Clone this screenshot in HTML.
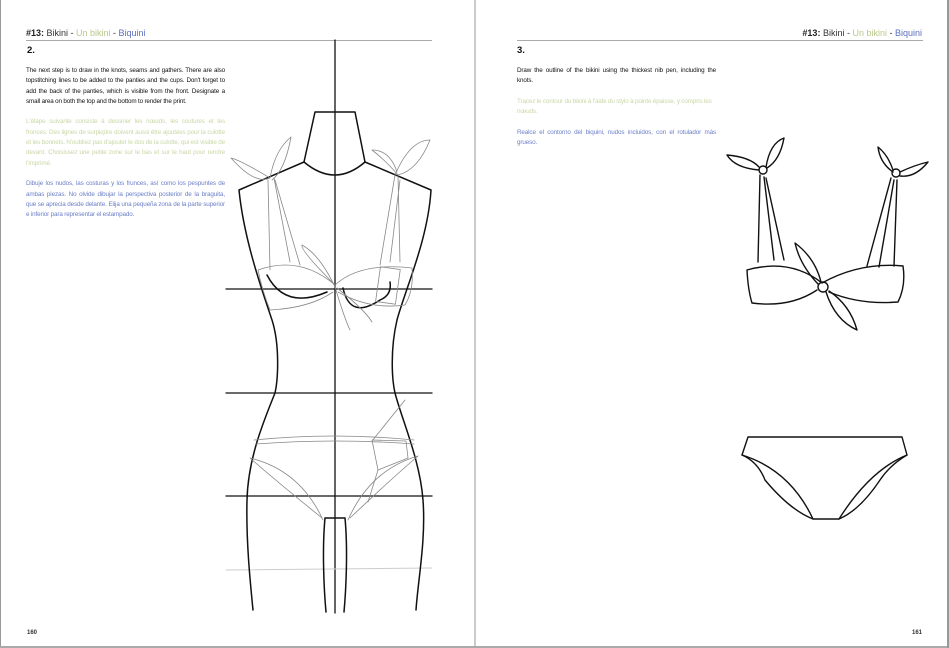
<!DOCTYPE html>
<html><head><meta charset="utf-8"><style>
html,body{margin:0;padding:0}
body{width:949px;height:648px;position:relative;background:#fff;overflow:hidden;font-family:"Liberation Sans",sans-serif;}
.hd{position:absolute;top:28px;font-size:9px;color:#333;white-space:nowrap}
.hd b{color:#222}
.g{color:#b7c98a}.b{color:#5a6fc0}
.rule{position:absolute;top:40px;height:1px;background:#aaa}
.num{position:absolute;top:45px;font-size:9.5px;font-weight:bold;color:#111}
.txt{position:absolute;font-size:6.3px;line-height:10.3px;text-align:justify;width:199px;letter-spacing:-0.13px;word-spacing:-0.1px}
.txt p{margin:0 0 10.3px 0}
.j{text-align-last:left}
.en{color:#111}.fr{color:#c9d7a6}.es{color:#6b7fc8}
.pg{position:absolute;top:630px;font-size:6px;font-weight:bold;color:#333}
</style></head><body>
<div style="position:absolute;left:0;top:0;width:1px;height:648px;background:#999"></div>
<div style="position:absolute;left:0;top:646px;width:949px;height:2px;background:#aaa"></div>
<div style="position:absolute;left:474px;top:0;width:2px;height:646px;background:#ccc"></div>
<div style="position:absolute;left:947px;top:0;width:2px;height:648px;background:#999"></div>

<div class="hd" style="left:26px"><b>#13:</b> Bikini - <span class="g">Un bikini</span> - <span class="b">Biquini</span></div>
<div class="rule" style="left:26px;width:406px"></div>
<div class="num" style="left:27px">2.</div>
<div class="txt" style="left:26px;top:66px">
<p class="en">The next step is to draw in the knots, seams and gathers. There are also topstitching lines to be added to the panties and the cups. Don't forget to add the back of the panties, which is visible from the front. Designate a small area on both the top and the bottom to render the print.</p>
<p class="fr">L'étape suivante consiste à dessiner les nœuds, les coutures et les fronces. Des lignes de surpiqûre doivent aussi être ajoutées pour la culotte et les bonnets. N'oubliez pas d'ajouter le dos de la culotte, qui est visible de devant. Choisissez une petite zone sur le bas et sur le haut pour rendre l'imprimé.</p>
<p class="es">Dibuje los nudos, las costuras y los frunces, así como los pespuntes de ambas piezas. No olvide dibujar la perspectiva posterior de la braguita, que se aprecia desde delante. Elija una pequeña zona de la parte superior e inferior para representar el estampado.</p>
</div>
<div class="pg" style="left:27px">160</div>

<div class="hd" style="right:27px"><b>#13:</b> Bikini - <span class="g">Un bikini</span> - <span class="b">Biquini</span></div>
<div class="rule" style="left:517px;width:406px"></div>
<div class="num" style="left:517px">3.</div>
<div class="txt" style="left:517px;top:66px">
<p class="en" style="text-align-last:justify">Draw the outline of the bikini using the thickest nib pen, including the<br><span style="display:inline-block">knots.</span></p>
<p class="fr">Tracez le contour du bikini à l'aide du stylo à pointe épaisse, y compris les<br>nœuds.</p>
<p class="es">Realce el contorno del biquini, nudos incluidos, con el rotulador más grueso.</p>
</div>
<div class="pg" style="left:912px">161</div>

<svg width="949" height="648" style="position:absolute;left:0;top:0" fill="none" stroke-linecap="round" stroke-linejoin="round">
<g stroke="#111" stroke-width="1.3">
<line x1="335" y1="40" x2="335" y2="613"/>
<line x1="226" y1="289" x2="432" y2="289"/>
<line x1="226" y1="393" x2="432" y2="393"/>
<line x1="226" y1="496" x2="432" y2="496"/>
</g>
<line x1="226" y1="570" x2="432" y2="568" stroke="#ccc" stroke-width="1"/>
<g stroke="#111" stroke-width="1.5">
<path d="M304 162 L315 112 L355 112 L365 162"/>
<path d="M304 162 Q335 188 365 162"/>
<path d="M304 162 L239 190 C244 240 262 290 272 320 C280 345 278 380 275 393 C262 425 248 460 247 500 C246 540 250 580 253 610"/>
<path d="M365 162 L431 190 C428 240 405 290 397 320 C390 350 392 380 395 393 C402 420 420 460 423 500 C426 540 418 580 416 610"/>
<path d="M325 518 L345 518 M325 518 C322 550 324 590 326 612 M345 518 C348 550 346 590 344 612"/>
<path d="M267 275 Q285 310 327 292 M343 288 Q350 320 380 300 Q392 295 390 282"/>
</g>
<g stroke="#888" stroke-width="0.8">
<path d="M258 270 Q300 255 335 285 Q360 262 412 268 M258 270 Q262 290 270 310 Q310 308 333 292 M412 268 Q414 290 405 305 Q370 310 338 292"/>
<path d="M270 270 L268 180 M290 262 L274 178 M300 265 L275 180 M380 265 L395 175 M400 262 L398 175 M390 262 L400 180"/>
<path d="M270 178 Q240 160 231 158 Q255 185 270 178 Q275 150 291 137 Q285 170 272 180"/>
<path d="M395 175 Q410 140 430 140 Q418 170 398 175 Q385 160 372 150 Q390 150 397 172"/>
<path d="M335 285 Q300 250 302 245 Q320 255 335 287 Q345 320 350 330 M337 288 Q365 310 372 322"/>
<rect x="378" y="268" width="20" height="35" transform="rotate(8 388 285)"/>
<path d="M254 440 Q335 432 414 440 M256 444 Q335 438 414 444"/>
<path d="M250 458 Q300 470 323 520 M250 458 Q275 480 322 518 M418 456 Q370 470 348 520 M418 456 Q390 480 350 518"/>
<path d="M372 440 L406 441 L408 458 L378 470 Z M378 470 L368 502 M372 441 L405 400"/>
</g>
<g stroke="#111" stroke-width="1.4">
<path d="M747 270 Q790 258 822 283 Q860 262 903 266 Q906 286 898 302 Q860 305 829 292 M747 270 Q748 290 752 303 Q790 308 817 290"/>
<circle cx="823" cy="287" r="5"/>
<path d="M818 284 Q800 265 795 243 Q815 258 821 282 M826 292 Q835 320 857 330 Q850 305 829 291"/>
<path d="M758 262 L760 175 M774 260 L764 177 M784 260 L766 178 M867 266 L891 178 M879 267 L894 180 M894 266 L897 180"/>
<circle cx="763" cy="170" r="4"/>
<path d="M759 170 Q735 168 727 155 Q750 157 759 167 M766 167 Q770 143 784 138 Q780 160 767 168"/>
<circle cx="896" cy="173" r="4"/>
<path d="M893 170 Q888 155 878 147 Q880 163 893 172 M900 172 Q915 165 928 162 Q915 178 900 176"/>
<path d="M748 437 L902 437 L907 455 Q870 470 839 519 L813 519 Q790 470 742 455 Z"/>
<path d="M742 455 Q758 462 765 480 Q790 510 813 519 M907 455 Q890 465 880 480 Q860 510 839 519"/>
</g>
</svg>
</body></html>
